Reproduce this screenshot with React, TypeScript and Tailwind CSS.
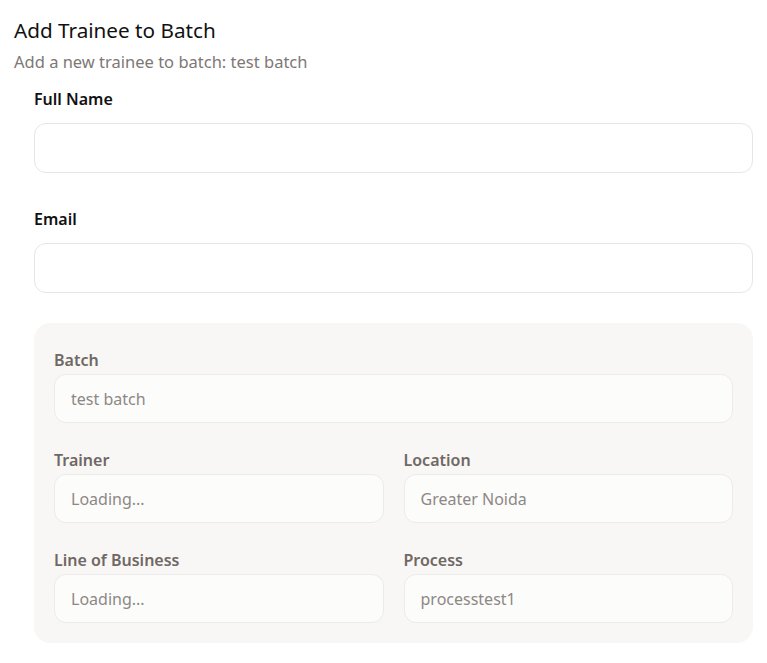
import React from "react";

const fieldLabel = "block text-base font-semibold leading-6 text-[#111111]";
const outerInput =
  "w-full h-[50px] rounded-xl border border-[#e6e6e6] bg-white px-4 text-base outline-none";
const innerLabel = "block text-base font-semibold leading-6 text-[#6f6864] mb-0.5";
const innerInput =
  "w-full h-[49px] rounded-xl border border-[#ecebe9] bg-[#fcfcfb] px-4 text-base text-[#8d8885] outline-none";

const ReadOnlyField: React.FC<{ label: string; value: string }> = ({ label, value }) => (
  <div>
    <label className={innerLabel}>{label}</label>
    <input className={innerInput} value={value} readOnly />
  </div>
);

const App: React.FC = () => {
  return (
    <div className="min-h-screen bg-white font-['Noto_Sans',sans-serif]">
      <div className="px-[14px] pt-[16px]">
        <h2 className="text-[20.7px] leading-7 text-[#111111]">Add Trainee to Batch</h2>
        <p className="text-[16.5px] leading-6 mt-[6px] text-[#7d7875]">
          Add a new trainee to batch: test batch
        </p>
      </div>

      <form className="pl-[34px] pr-[14px] pt-[13px]">
        <div>
          <label className={fieldLabel}>Full Name</label>
          <div className="pt-3">
            <input className={outerInput} />
          </div>
        </div>

        <div className="mt-[34px]">
          <label className={fieldLabel}>Email</label>
          <div className="pt-3">
            <input className={outerInput} />
          </div>
        </div>

        <div className="mt-[30px] rounded-2xl bg-[#f8f7f5] px-5 pt-[25px] pb-5 flex flex-col gap-[25px]">
          <ReadOnlyField label="Batch" value="test batch" />
          <div className="grid grid-cols-2 gap-5">
            <ReadOnlyField label="Trainer" value="Loading..." />
            <ReadOnlyField label="Location" value="Greater Noida" />
          </div>
          <div className="grid grid-cols-2 gap-5">
            <ReadOnlyField label="Line of Business" value="Loading..." />
            <ReadOnlyField label="Process" value="processtest1" />
          </div>
        </div>
      </form>
    </div>
  );
};

export default App;
